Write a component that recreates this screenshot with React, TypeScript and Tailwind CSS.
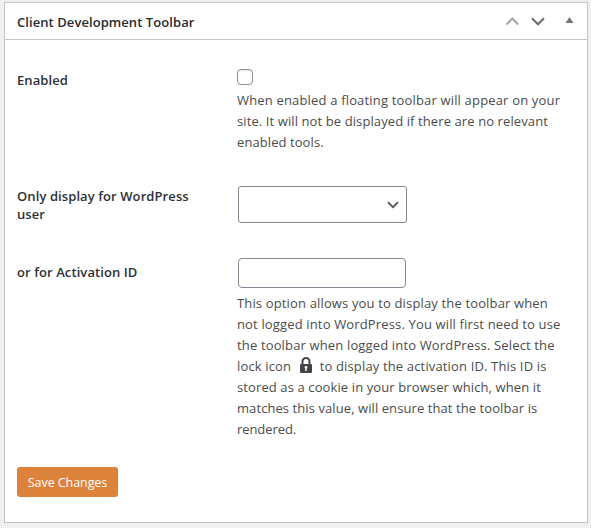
import type { ReactNode } from 'react';

function Row({ label, className, children }: { label: ReactNode; className: string; children: ReactNode }) {
  return (
    <div className={`flex ${className}`}>
      <div className="w-[220px] shrink-0 text-[13px] leading-[18px] font-semibold tracking-[0.09px] text-[#2c3136]">{label}</div>
      <div className="min-w-0 flex-1">{children}</div>
    </div>
  );
}

function Line({ children, className = 'tracking-[0.15px]' }: { children: ReactNode; className?: string }) {
  return <span className={`block whitespace-nowrap ${className}`}>{children}</span>;
}

export default function App() {
  return (
    <div className="h-[528px] w-[591px] overflow-hidden bg-[#f0f0f0] pt-0.5 pl-1 font-['Open_Sans',sans-serif] text-[13px] text-[#4c4c4c]">
      <section className="h-[521px] w-[584px] border border-[#c3c4c7] bg-white">
        <header className="flex h-[37px] items-center border-b border-[#c3c4c7] pl-3">
          <h2 className="pt-[3px] text-[13px] font-semibold tracking-[0.07px] whitespace-nowrap text-[#262b30]">Client Development Toolbar</h2>
          <svg className="ml-auto h-9 w-[90px]" viewBox="0 0 90 36" fill="none">
            <path d="M9.5 21.5 15.3 15.5 21.1 21.5" stroke="#a5a5a5" strokeWidth="2" />
            <path d="M35 15.3 41 21.3 47 15.3" stroke="#696d72" strokeWidth="2" />
            <path d="M68.5 20 72.5 14 76.5 20Z" fill="#73777c" />
          </svg>
        </header>
        <form className="pl-3" onSubmit={(event) => event.preventDefault()}>
          <Row label="Enabled" className="h-[116px] pt-[31px]">
            <input type="checkbox" aria-label="Enabled" className="mt-[-2px] block size-4 appearance-none rounded-[4px] border border-[#8c8f94] bg-white shadow-[inset_0_1px_2px_rgba(0,0,0,0.1)]" />
            <p className="mt-[5px] leading-[21px]">
              <Line className="tracking-[0.17px]">When enabled a floating toolbar will appear on your</Line>
              <Line className="tracking-[0.1px]">site. It will not be displayed if there are no relevant</Line>
              <Line className="tracking-[0.08px]">enabled tools.</Line>
            </p>
          </Row>
          <Row label={<>Only display for WordPress<br />user</>} className="h-[75px] pt-[31px]">
            <div className="relative mt-[-1px] ml-px h-[37px] w-[169px]">
              <select aria-label="WordPress user" className="block h-full w-full appearance-none rounded-[3px] border border-[#7e8993] bg-white" />
              <svg className="pointer-events-none absolute top-[15px] right-2 h-2 w-3" viewBox="0 0 12 8" fill="none">
                <path d="m1 1.2 5 5 5-5" stroke="#555" strokeWidth="1.8" />
              </svg>
            </div>
          </Row>
          <Row label="or for Activation ID" className="h-[236px] pt-[32px]">
            <input type="text" aria-label="Activation ID" className="mt-[-5px] ml-px block h-[30px] w-[168px] rounded-[4px] border border-[#7e8993] bg-white" />
            <p className="mt-[5px] leading-[21px]">
              <Line>This option allows you to display the toolbar when</Line>
              <Line>not logged into WordPress. You will first need to use</Line>
              <Line>the toolbar when logged into WordPress. Select the</Line>
              <Line>
                lock icon
                <svg className="mr-[7.5px] ml-[9px] inline-block h-4 w-3 align-[-2px]" viewBox="0 0 12 16">
                  <path d="M2.5 8V4.5a3.5 3.5 0 0 1 7 0V8" fill="none" stroke="#444" strokeWidth="2" />
                  <rect y="7" width="12" height="9" rx="1" fill="#444" />
                  <path d="M6 9a1.4 1.4 0 0 0-.7 2.6V14h1.4v-2.4A1.4 1.4 0 0 0 6 9Z" fill="white" />
                </svg>
                to display the activation ID. This ID is
              </Line>
              <Line className="tracking-[0.11px]">stored as a cookie in your browser which, when it</Line>
              <Line className="tracking-[0.08px]">matches this value, will ensure that the toolbar is</Line>
              <Line className="tracking-[-0.08px]">rendered.</Line>
            </p>
          </Row>
          <button type="submit" className="block h-[30px] w-[101px] rounded-[3px] bg-[#dd823b] pt-px text-[12.5px] leading-[30px] tracking-[-0.07px] whitespace-nowrap text-white">Save Changes</button>
        </form>
      </section>
    </div>
  );
}
